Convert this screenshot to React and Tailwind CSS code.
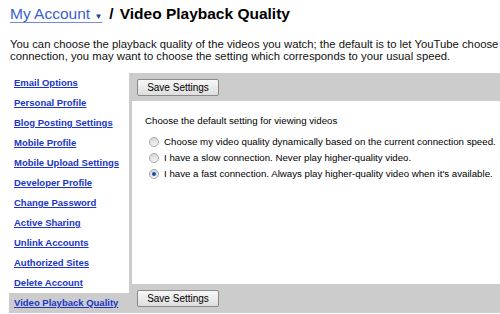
import React, { useState } from 'react';

const LINKS = [
  'Email Options',
  'Personal Profile',
  'Blog Posting Settings',
  'Mobile Profile',
  'Mobile Upload Settings',
  'Developer Profile',
  'Change Password',
  'Active Sharing',
  'Unlink Accounts',
  'Authorized Sites',
  'Delete Account',
  'Video Playback Quality',
];

const OPTIONS = [
  'Choose my video quality dynamically based on the current connection speed.',
  'I have a slow connection. Never play higher-quality video.',
  "I have a fast connection. Always play higher-quality video when it's available.",
];

function SaveButton() {
  return (
    <button className="h-[17px] w-[82px] rounded-[2px] border border-[#8a8a8a] bg-gradient-to-b from-[#f7f7f7] to-[#dedede] text-[10px] leading-none text-black">
      Save Settings
    </button>
  );
}

function Radio({ checked, onClick }) {
  return (
    <span
      onClick={onClick}
      className="flex h-[10px] w-[10px] shrink-0 items-center justify-center rounded-full border border-[#a8a8a8] bg-gradient-to-b from-[#d8d8d8] to-[#f4f4f4]"
    >
      {checked && <span className="h-[4px] w-[4px] rounded-full bg-[#1d4fa8]" />}
    </span>
  );
}

export default function App() {
  const [quality, setQuality] = useState(2);

  return (
    <div className="h-[314px] w-[500px] overflow-hidden bg-white font-['Liberation_Sans',Arial,sans-serif] text-black">
      {/* Header */}
      <div className="flex items-baseline whitespace-nowrap pl-[10px] pt-[5px] text-[15.5px] leading-[18px]">
        <a href="#" className="text-[#3b5fd0] underline decoration-[#6f8ce0] underline-offset-[3px]">
          My Account <span className="text-[8px] text-[#1d3aa6]">▼</span>
        </a>
        <span className="ml-[7px] font-bold">/</span>
        <span className="ml-[6px] font-bold">Video Playback Quality</span>
      </div>

      {/* Intro */}
      <p className="mt-[12px] whitespace-nowrap pl-[10px] text-[11.3px] leading-[12px] text-[#111]">
        You can choose the playback quality of the videos you watch; the default is to let YouTube choose
        <br />
        connection, you may want to choose the setting which corresponds to your usual speed.
      </p>

      {/* Body */}
      <div className="mt-[11px] flex">
        <ul className="ml-[9px] w-[120px] shrink-0">
          {LINKS.map((l, i) => (
            <li
              key={l}
              className={`flex h-[20px] items-center pl-[5px] ${i === LINKS.length - 1 ? 'bg-[#cccccc]' : ''}`}
            >
              <a href="#" className="whitespace-nowrap text-[9.5px] font-bold text-[#1a35c8] underline underline-offset-[1px]">
                {l}
              </a>
            </li>
          ))}
        </ul>

        <div className="flex h-[240px] flex-1 flex-col bg-[#cccccc] pl-[3px]">
          <div className="flex h-[28px] items-center pl-[5px] pt-[1px]">
            <SaveButton />
          </div>
          <div className="h-[183px] bg-white pl-[13px] pt-[14px] text-[9.7px] leading-[12px]">
            <div className="whitespace-nowrap">Choose the default setting for viewing videos</div>
            <div className="mt-[9px] flex flex-col gap-[4px] pl-[4px]">
              {OPTIONS.map((o, i) => (
                <label key={o} className="flex items-center gap-[5px] whitespace-nowrap" onClick={() => setQuality(i)}>
                  <Radio checked={quality === i} />
                  <span>{o}</span>
                </label>
              ))}
            </div>
          </div>
          <div className="flex h-[29px] items-center pl-[5px]">
            <SaveButton />
          </div>
        </div>
      </div>
    </div>
  );
}
